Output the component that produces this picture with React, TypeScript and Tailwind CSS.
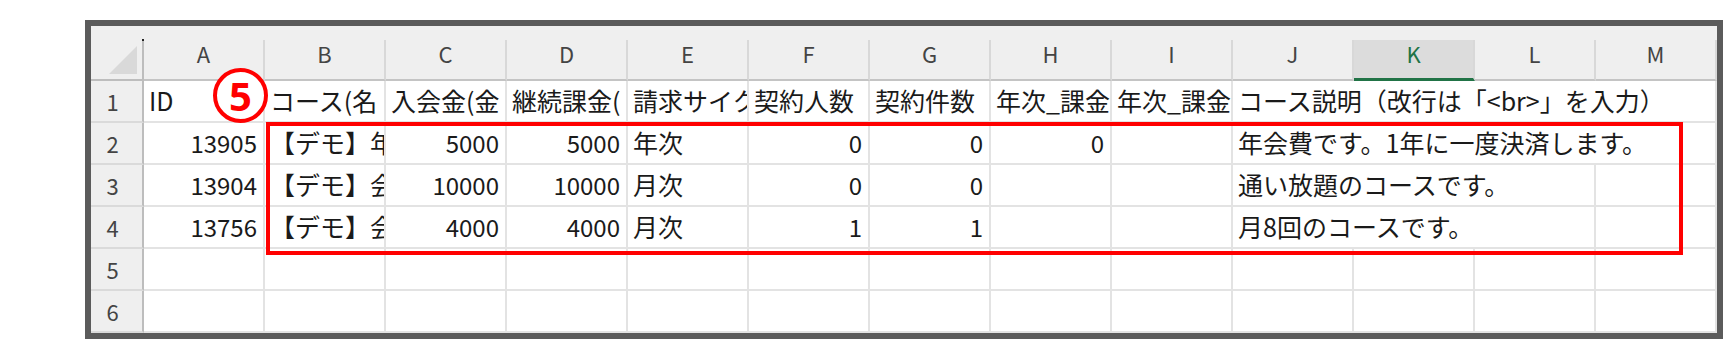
import React from 'react';
import clsx from 'clsx';

const COLS = ['A', 'B', 'C', 'D', 'E', 'F', 'G', 'H', 'I', 'J', 'K', 'L', 'M'];

type Cell = { text?: string; num?: boolean; span?: number };

const SPAN: Record<number, string> = { 3: 'col-span-3', 4: 'col-span-4' };

const empty = (n: number): Cell[] => Array.from({ length: n }, () => ({}));

// only the part of each header that shows in its column
const ROWS: Cell[][] = [
  [
    { text: 'ID' },
    { text: 'コース(名' },
    { text: '入会金(金' },
    { text: '継続課金(' },
    { text: '請求サイク' },
    { text: '契約人数' },
    { text: '契約件数' },
    { text: '年次_課金' },
    { text: '年次_課金' },
    { text: 'コース説明（改行は「<br>」を入力）', span: 4 },
  ],
  [
    { text: '13905', num: true },
    { text: '【デモ】年' },
    { text: '5000', num: true },
    { text: '5000', num: true },
    { text: '年次' },
    { text: '0', num: true },
    { text: '0', num: true },
    { text: '0', num: true },
    {},
    { text: '年会費です。1年に一度決済します。', span: 4 },
  ],
  [
    { text: '13904', num: true },
    { text: '【デモ】会' },
    { text: '10000', num: true },
    { text: '10000', num: true },
    { text: '月次' },
    { text: '0', num: true },
    { text: '0', num: true },
    {},
    {},
    { text: '通い放題のコースです。', span: 3 },
    {},
  ],
  [
    { text: '13756', num: true },
    { text: '【デモ】会' },
    { text: '4000', num: true },
    { text: '4000', num: true },
    { text: '月次' },
    { text: '1', num: true },
    { text: '1', num: true },
    {},
    {},
    { text: '月8回のコースです。', span: 3 },
    {},
  ],
  empty(13),
  empty(13),
];

const HeaderCell = ({ label }: { label: string }): JSX.Element => {
  const active = label === 'K';
  return (
    <div className="flex flex-col bg-[#efefef]">
      <div className="h-[14px]" />
      <div
        className={clsx(
          'flex h-[41px] justify-center border-r-2 border-[#d8d8d8] text-[22px] leading-[27px]',
          active
            ? 'border-b-[3px] border-b-[#217346] bg-[#dcdcdc] text-[#217346]'
            : 'border-b-2 border-b-[#c4c4c4] text-[#444444]'
        )}
      >
        {label}
      </div>
    </div>
  );
};

const App = (): JSX.Element => {
  return (
    <div className="h-[340px] w-[1727px] bg-white pl-[85px] pt-[20px] font-['Noto_Sans_CJK_JP','Noto_Sans',sans-serif]">
      <div className="relative w-[1638px] border-[6px] border-[#5b5b5b] bg-white">
        <div className="grid grid-cols-[53px_repeat(13,121px)] grid-rows-[55px_repeat(6,42px)]">
          {/* select-all corner */}
          <div className="flex flex-col bg-[#efefef]">
            <div className="h-[14px]" />
            <div className="relative flex h-[41px] items-end justify-end border-b-2 border-r-2 border-[#bdbdbd] pb-[5px] pr-[5px]">
              <span className="absolute -right-[2px] -top-[1px] h-[2px] w-[2px] bg-[#222]" />
              <svg width="28" height="28" viewBox="0 0 28 28">
                <polygon points="28,0 28,28 0,28" fill="#d9d9d9" />
              </svg>
            </div>
          </div>
          {COLS.map((c) => (
            <HeaderCell key={c} label={c} />
          ))}

          {ROWS.map((row, i) => (
            <React.Fragment key={i}>
              <div className="flex items-center justify-center border-b-2 border-r-2 border-b-[#dadada] border-r-[#bdbdbd] bg-[#efefef] pr-[8px] text-[22px] text-[#444444]">
                {i + 1}
              </div>
              {row.map((cell, j) => (
                <div
                  key={j}
                  className={clsx(
                    'flex items-center overflow-hidden whitespace-nowrap border-b-2 border-r-2 border-[#e3e3e3] text-[#1a1a1a]',
                    cell.span && SPAN[cell.span],
                    cell.num ? 'justify-end pr-[6px] text-[24px]' : 'pl-[5px] text-[25px]'
                  )}
                >
                  {cell.text}
                </div>
              ))}
            </React.Fragment>
          ))}
        </div>

        {/* annotation: circled number */}
        <div className="absolute left-[122px] top-[42px] flex h-[55px] w-[55px] items-center justify-center rounded-full border-[4px] border-[#ff0000] bg-white font-['Noto_Sans',sans-serif] text-[40px] font-bold leading-none text-[#ff0000]">
          5
        </div>

        {/* annotation: highlight box */}
        <div className="absolute left-[175px] top-[96px] h-[133px] w-[1417px] border-[4px] border-[#ff0000]" />
      </div>
    </div>
  );
};

export default App;
